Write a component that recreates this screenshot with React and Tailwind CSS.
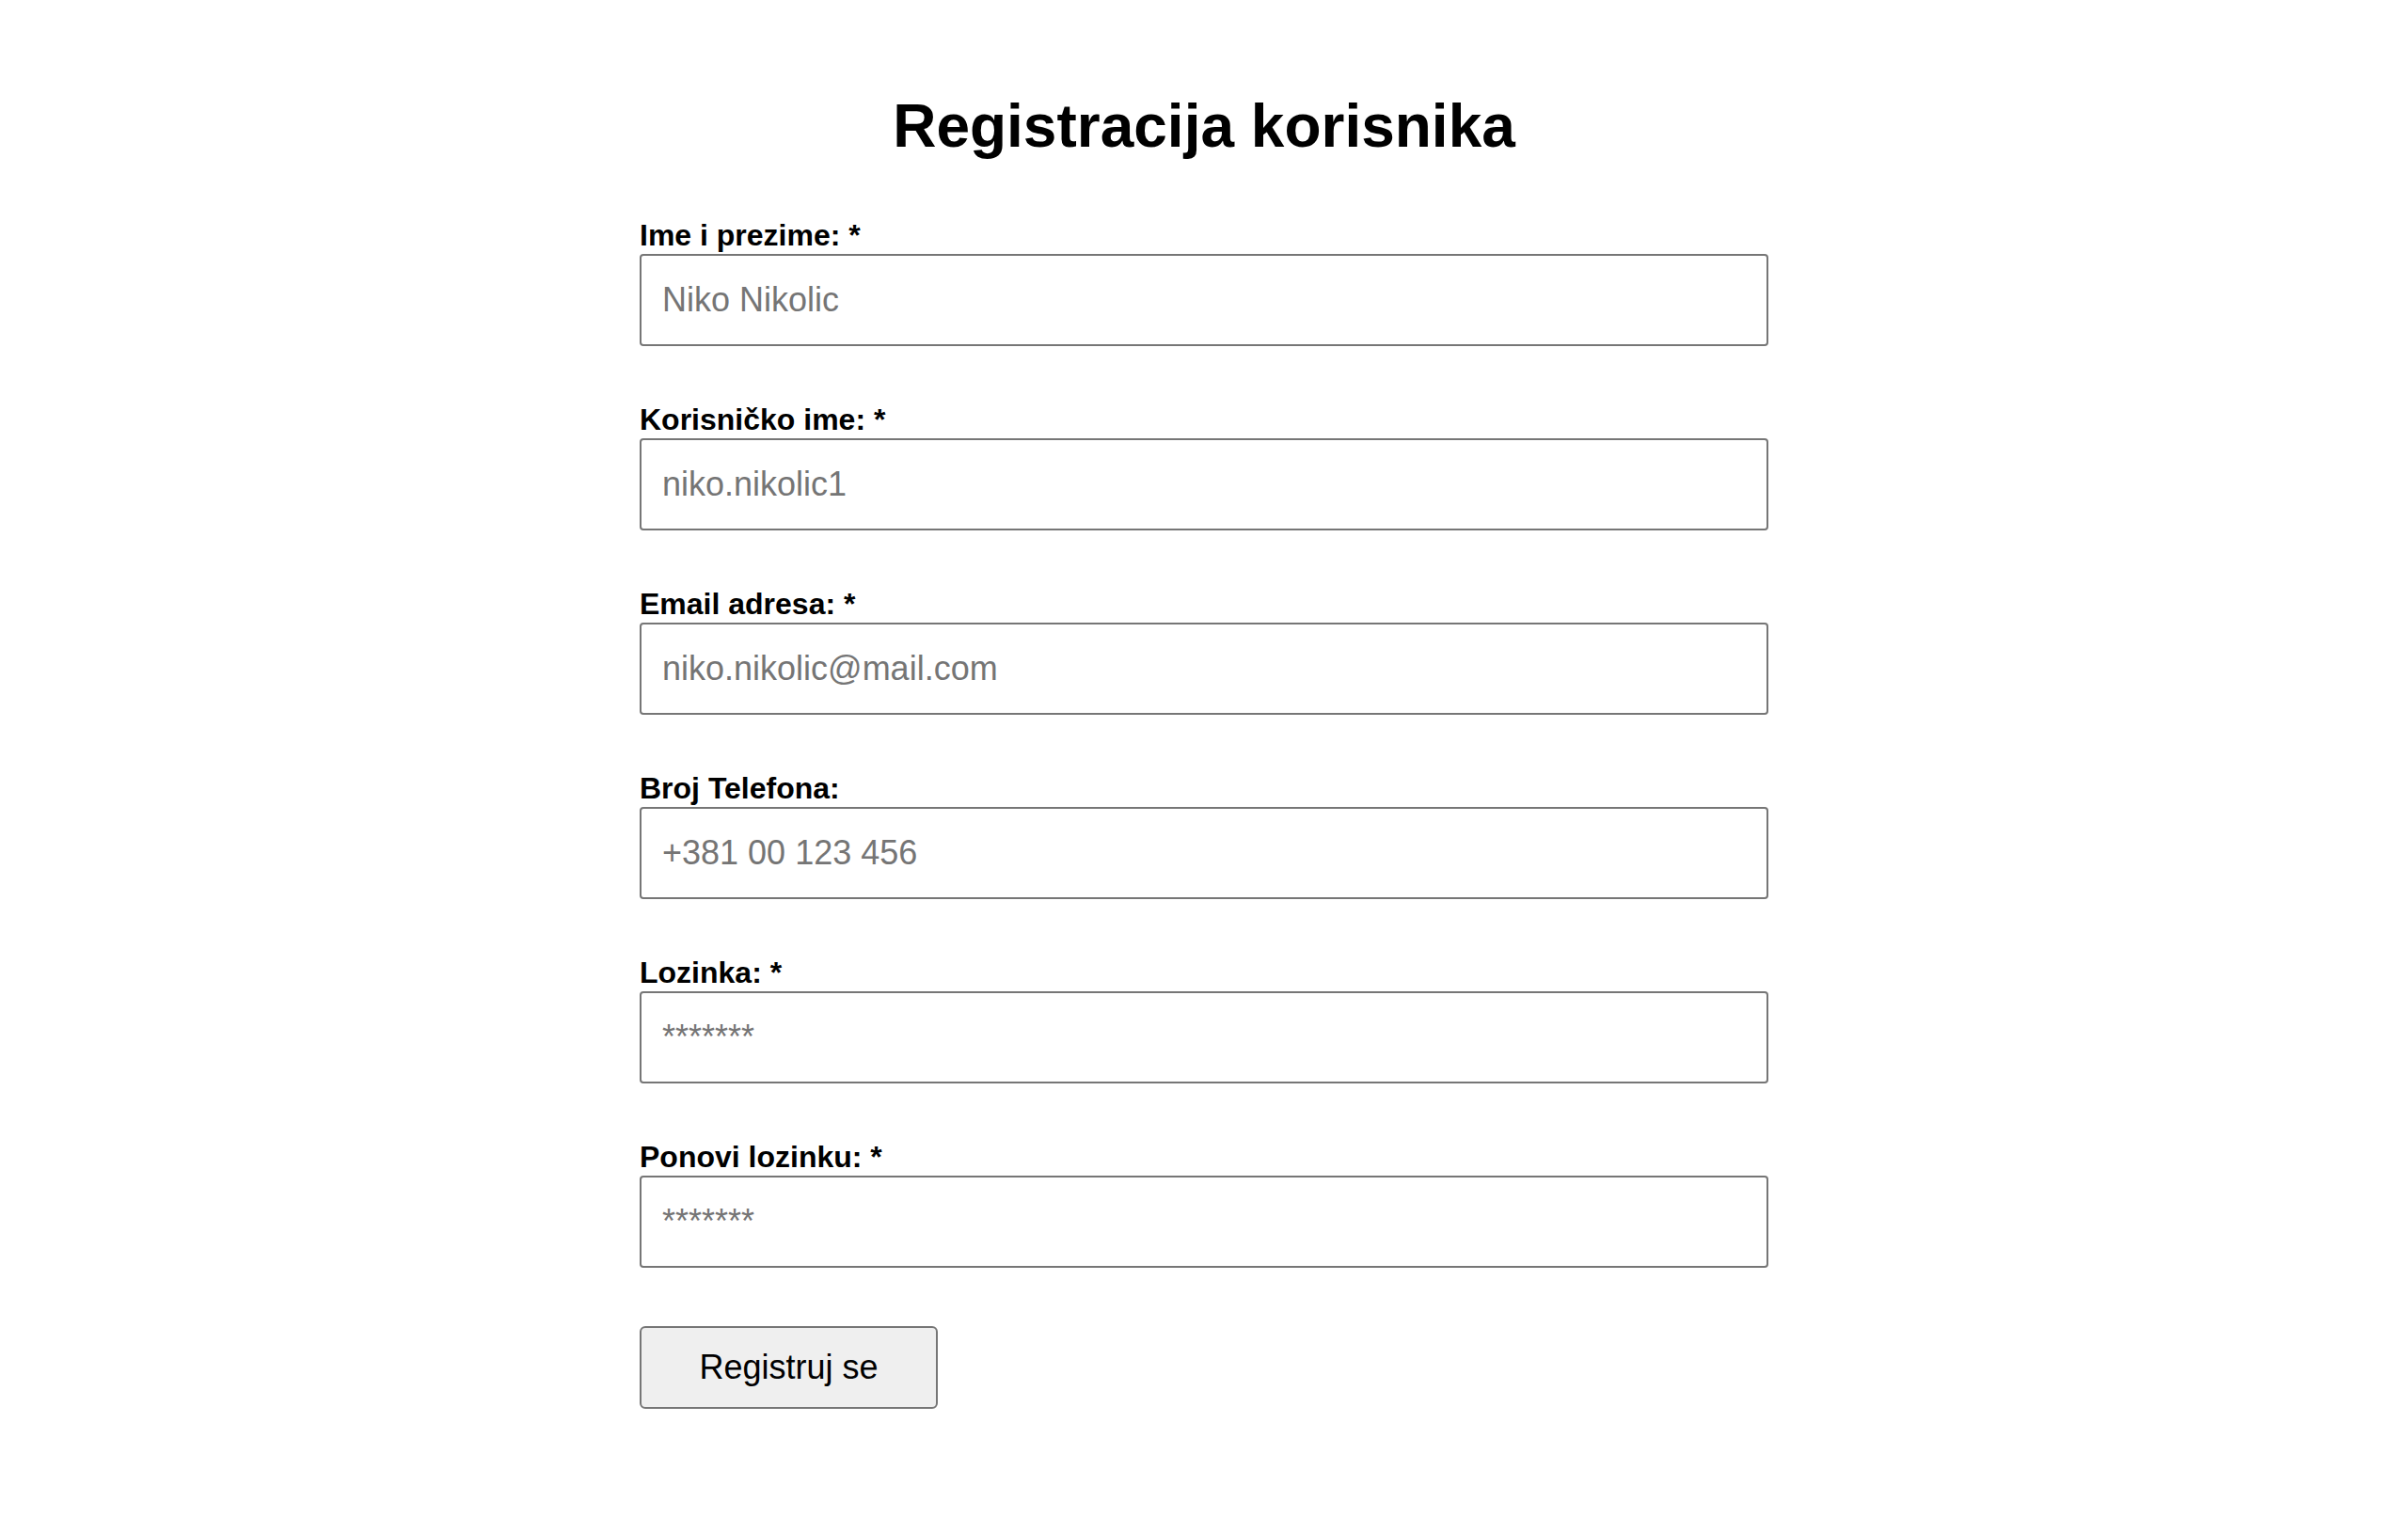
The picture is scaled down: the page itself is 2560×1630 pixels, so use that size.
import { useState } from 'react';

const fields = [
    { id: 'ime', label: 'Ime i prezime: *', type: 'text', placeholder: 'Niko Nikolic' },
    { id: 'korisnicko', label: 'Korisničko ime: *', type: 'text', placeholder: 'niko.nikolic1' },
    { id: 'email', label: 'Email adresa: *', type: 'email', placeholder: 'niko.nikolic@mail.com' },
    { id: 'telefon', label: 'Broj Telefona:', type: 'tel', placeholder: '+381 00 123 456' },
    { id: 'lozinka', label: 'Lozinka: *', type: 'password', placeholder: '*******' },
    { id: 'ponovi', label: 'Ponovi lozinku: *', type: 'password', placeholder: '*******' },
];

const App = () => {
    const [values, setValues] = useState({});

    const handleChange = (id) => (e) => setValues({ ...values, [id]: e.target.value });

    return (
        <div className="min-h-screen bg-white text-black font-['Liberation_Sans',Arial,sans-serif]">
            <div className="w-[1200px] mx-auto pt-[98px] pb-[100px]">
                <h1 className="text-[64px] leading-[73.5px] font-bold text-center">Registracija korisnika</h1>

                <form onSubmit={e => e.preventDefault()}>
                    {fields.map(f => (
                        <div key={f.id} className="mt-[60px]">
                            {/* LABEL */}
                            <label htmlFor={f.id} className="block text-[32px] leading-[37px] font-bold mb-[1px]">
                                {f.label}
                            </label>
                            {/* INPUT */}
                            <input
                                id={f.id}
                                type={f.type}
                                value={values[f.id] || ''}
                                onChange={handleChange(f.id)}
                                placeholder={f.placeholder}
                                className="block w-full h-[98px] px-[22px] text-[36px] border-2 border-[#767676] rounded-[4px] bg-white outline-none placeholder:text-[#757575]"
                            />
                        </div>
                    ))}

                    {/* SUBMIT */}
                    <button
                        type="submit"
                        className="mt-[62px] w-[317px] h-[88px] text-[36px] bg-[#efefef] border-2 border-[#767676] rounded-[6px] text-black"
                    >
                        Registruj se
                    </button>
                </form>
            </div>
        </div>
    );
};

export default App;
